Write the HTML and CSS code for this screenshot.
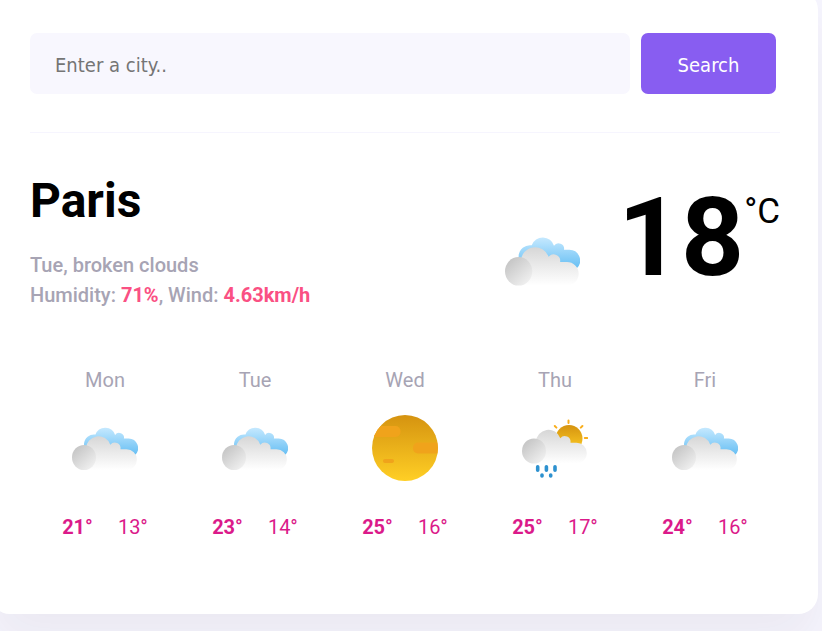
FILE: index.html
```html
<!DOCTYPE html>
<html lang="en">
<head>
<meta charset="utf-8">
<title>Weather</title>
<link rel="stylesheet" href="styles.css">
</head>
<body>
<svg class="defs" aria-hidden="true">
  <defs>
    <linearGradient id="blue" gradientUnits="userSpaceOnUse" x1="0" y1="12" x2="0" y2="43"><stop offset="0" stop-color="#c8eaff"/><stop offset="1" stop-color="#5cbaf2"/></linearGradient>
    <linearGradient id="grey" gradientUnits="userSpaceOnUse" x1="0" y1="21" x2="0" y2="55"><stop offset="0" stop-color="#d6d6d6"/><stop offset="0.5" stop-color="#ebebeb"/><stop offset="1" stop-color="#ffffff"/></linearGradient>
    <linearGradient id="ball" gradientUnits="userSpaceOnUse" x1="3" y1="34" x2="20" y2="53"><stop offset="0" stop-color="#c6c6c6"/><stop offset="1" stop-color="#f0f0f0"/></linearGradient>
    <linearGradient id="sun" x1="0" y1="0" x2="0" y2="1"><stop offset="0" stop-color="#d59310"/><stop offset="1" stop-color="#ffcf25"/></linearGradient>
    <clipPath id="disc"><circle cx="33" cy="33" r="33"/></clipPath>
    <g id="front">
      <path fill="url(#grey)" d="M14 55V33.500a12.500 12.500 0 0 1 24.300-3.800a5.800 5.800 0 0 1 10.200 4.600H54.500a10.350 10.350 0 0 1 0 20.700Z"/>
      <ellipse fill="url(#ball)" cx="12" cy="42.500" rx="12" ry="12.600"/>
    </g>
    <symbol id="clouds" viewBox="0 0 66 66">
      <path fill="url(#blue)" d="M12 40V29a10 10 0 0 1 11.500-9.400a10.300 10.300 0 0 1 19.600 0.500a4.800 4.800 0 0 1 8.800 3.400H56.500a9.500 9.500 0 0 1 6.500 16.500Z"/>
      <use href="#front"/>
    </symbol>
    <symbol id="clear" viewBox="0 0 66 66">
      <circle cx="33" cy="33" r="33" fill="url(#sun)"/>
      <g clip-path="url(#disc)" fill="#f0a31b"><rect x="-8" y="11" width="36.500" height="11" rx="5"/><rect x="41" y="27.500" width="36" height="11" rx="5"/><rect x="11" y="44" width="11" height="4" rx="2"/></g>
    </symbol>
    <symbol id="rain" viewBox="0 0 66 66">
      <circle cx="47" cy="23.500" r="13.500" fill="url(#sun)"/>
      <path d="M46.500 5.500v2.500M32.800 11l1.600 1.600M60.400 11l-1.600 1.600M62.800 23h2.500" stroke="#f9ae1c" stroke-width="2" stroke-linecap="round"/>
      <use href="#front" y="-6.500"/>
      <path d="M15.700 51.700v3.600M24.400 51.700v3.600M33 51.700v3.600M20 60v1M28.700 60v1" stroke="#2d91cf" stroke-width="3.600" stroke-linecap="round"/>
    </symbol>
  </defs>
</svg>
<main class="card">
  <form class="search">
    <input class="search-input" type="search" placeholder="Enter a city.." aria-label="City">
    <button class="search-button" type="button">Search</button>
  </form>
  <section class="current">
    <div>
      <h1 class="city">Paris</h1>
      <p class="details">Tue, broken clouds<br>Humidity: <strong>71%</strong>, Wind: <strong>4.63km/h</strong></p>
    </div>
    <div class="temperature">
      <svg class="current-icon" role="img" aria-label="Broken clouds"><use href="#clouds"/></svg>
      <span class="value">18</span><span class="unit">°C</span>
    </div>
  </section>
  <section class="forecast">
    <div class="day"><div class="name">Mon</div><svg class="icon"><use href="#clouds"/></svg><div class="range"><strong>21°</strong><span>13°</span></div></div>
    <div class="day"><div class="name">Tue</div><svg class="icon"><use href="#clouds"/></svg><div class="range"><strong>23°</strong><span>14°</span></div></div>
    <div class="day"><div class="name">Wed</div><svg class="icon"><use href="#clear"/></svg><div class="range"><strong>25°</strong><span>16°</span></div></div>
    <div class="day"><div class="name">Thu</div><svg class="icon"><use href="#rain"/></svg><div class="range"><strong>25°</strong><span>17°</span></div></div>
    <div class="day"><div class="name">Fri</div><svg class="icon"><use href="#clouds"/></svg><div class="range"><strong>24°</strong><span>16°</span></div></div>
  </section>
</main>
</body>
</html>
```
FILE: styles.css
```css
* { box-sizing: border-box; }
html { overflow: hidden; }
body {
  margin: 0;
  display: flow-root;
  background: #f6f5fe;
  font-family: Roboto, sans-serif;
  font-size: 20px;
}
.defs { position: absolute; width: 0; height: 0; }
.card {
  margin: -10px 4px 17px -10px;
  padding: 43px 38px 72px 40px;
  border-radius: 20px;
  background: #fff;
  box-shadow: 0 30px 50px rgba(65, 50, 50, 0.06);
}
.search {
  display: grid;
  grid-template-columns: 80% 18%;
  gap: 11px;
  padding-bottom: 38px;
  border-bottom: 1px solid #f6f5fe;
}
.search-input, .search-button {
  height: 61px;
  padding: 2px 25px 0;
  border: 0;
  border-radius: 7px;
  font-family: "DejaVu Sans Condensed", "Noto Sans", sans-serif;
  font-size: 20px;
}
.search-input {
  min-width: 0;
  background: #f8f7fe;
  appearance: none;
}
.search-input::placeholder { color: #757575; }
.search-button { background: #885df1; color: #fff; }
.current {
  display: flex;
  justify-content: space-between;
  padding-top: 39px;
}
.city { margin: 0; font-size: 48px; line-height: 58px; }
.details {
  margin: 20px 0 0;
  color: #a7a4b4;
  font-weight: 500;
  line-height: 30px;
}
.details strong { color: #fa5083; font-weight: 700; }
.temperature { display: flex; align-items: flex-start; }
.current-icon { width: 75px; height: 75px; margin: 51px 38px 0 0; }
.value { font-size: 110px; font-weight: 700; line-height: 132px; }
.unit { margin-top: 18px; font-size: 35px; line-height: 44px; }
.forecast {
  display: grid;
  grid-template-columns: repeat(5, 1fr);
  margin-top: 55px;
}
.day { text-align: center; line-height: 30px; }
.name { color: #a7a4b4; }
.icon { display: block; width: 66px; height: 66px; margin: 20px auto 31px; }
.range {
  display: flex;
  justify-content: center;
  gap: 25px;
  color: #db1a8a;
}
```
